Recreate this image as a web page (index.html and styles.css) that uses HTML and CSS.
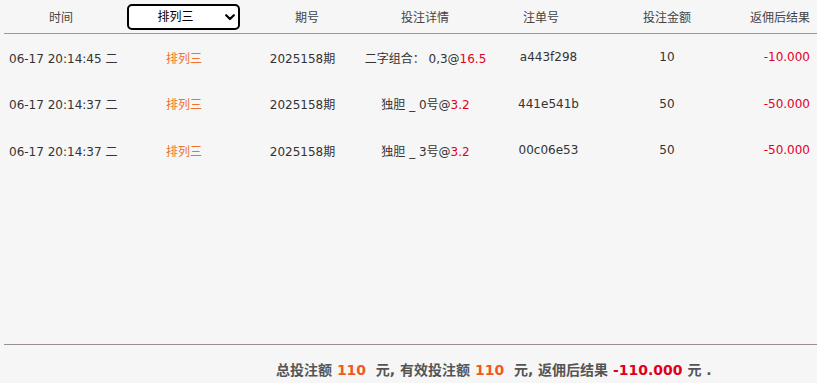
FILE: index.html
```html
<!DOCTYPE html>
<html lang="zh">
<head>
<meta charset="utf-8">
<title>投注记录</title>
<link rel="stylesheet" href="styles.css">
</head>
<body>
<div class="page">
  <div class="list">
    <div class="head">
      <div class="hcell c-time">时间</div>
      <div class="hcell">
        <span class="select-wrap">
          <select class="game-select">
            <option>排列三</option>
          </select>
          <svg class="chev" width="10" height="7" viewBox="0 0 10 7"><path d="M1.2 1.2 L5 5 L8.8 1.2" fill="none" stroke="#000" stroke-width="2.2" stroke-linecap="round" stroke-linejoin="round"/></svg>
        </span>
      </div>
      <div class="hcell">期号</div>
      <div class="hcell">投注详情</div>
      <div class="hcell">注单号</div>
      <div class="hcell">投注金额</div>
      <div class="hcell c-result">返佣后结果</div>
    </div>
    <div class="rows">
      <div class="row">
        <div class="cell c-time">06-17 20:14:45 二</div>
        <div class="cell game">排列三</div>
        <div class="cell">2025158期</div>
        <div class="cell">二字组合： 0,3@<span class="odds">16.5</span></div>
        <div class="cell c-id">a443f298</div>
        <div class="cell">10</div>
        <div class="cell c-result neg">-10.000</div>
      </div>
      <div class="row">
        <div class="cell c-time">06-17 20:14:37 二</div>
        <div class="cell game">排列三</div>
        <div class="cell">2025158期</div>
        <div class="cell">独胆 _ 0号@<span class="odds">3.2</span></div>
        <div class="cell c-id">441e541b</div>
        <div class="cell">50</div>
        <div class="cell c-result neg">-50.000</div>
      </div>
      <div class="row">
        <div class="cell c-time">06-17 20:14:37 二</div>
        <div class="cell game">排列三</div>
        <div class="cell">2025158期</div>
        <div class="cell">独胆 _ 3号@<span class="odds">3.2</span></div>
        <div class="cell c-id">00c06e53</div>
        <div class="cell">50</div>
        <div class="cell c-result neg">-50.000</div>
      </div>
    </div>
  </div>
  <div class="summary">
    <span>总投注额</span> <b class="amt">110</b> &nbsp;<span>元, 有效投注额</span> <b class="amt">110</b> &nbsp;<span>元, 返佣后结果</span> <b class="total">-110.000</b> <span>元 .</span>
  </div>
</div>
</body>
</html>
```

FILE: styles.css
```css
html, body {
  margin: 0;
  padding: 0;
  background: #f6f6f6;
}

body {
  font-family: "DejaVu Sans", Verdana, "Noto Sans CJK SC", sans-serif;
  font-size: 12px;
  color: #333;
}

.page {
  width: 817px;
  height: 383px;
  display: flex;
  flex-direction: column;
}

.list {
  height: 344px;
}

.head {
  margin-left: 4px;
  height: 33px;
  border-bottom: 1px solid #ad9090;
  display: grid;
  grid-template-columns: 118px 123px 124px 112px 120px 132px 1fr;
  align-items: center;
  color: #444;
}

.hcell {
  text-align: center;
  white-space: nowrap;
}

.hcell.c-time {
  padding-right: 4px;
}

.hcell.c-result {
  text-align: right;
  padding-right: 7px;
}

.select-wrap {
  position: relative;
  display: inline-block;
  vertical-align: middle;
}

.game-select {
  appearance: none;
  -webkit-appearance: none;
  width: 113px;
  height: 26px;
  box-sizing: border-box;
  border: 2px solid #000;
  border-radius: 5px;
  background: #fff;
  font-family: "DejaVu Sans", "Noto Sans CJK SC", sans-serif;
  font-size: 12px;
  color: #000;
  text-align: center;
  text-align-last: center;
  padding: 0 16px 0 0;
  margin: 0;
  display: block;
}

.chev {
  position: absolute;
  right: 5px;
  top: 10px;
  pointer-events: none;
}

.rows {
  margin-left: 4px;
}

.row {
  height: 46.5px;
  display: grid;
  grid-template-columns: 123px 114px 123px 123px 123px 114px 1fr;
  align-items: center;
}

.cell {
  text-align: center;
  white-space: nowrap;
}

.cell.c-time {
  text-align: left;
  padding-left: 5px;
}

.cell.c-result {
  text-align: right;
  padding-right: 7px;
}

.game {
  color: #f0712f;
}

.odds,
.neg {
  color: #e3001f;
}

.summary {
  flex: 1;
  margin-left: 4px;
  border-top: 1px solid #9a8f8f;
  padding: 16px 0 0 272px;
  font-size: 14px;
  font-weight: bold;
  color: #555;
  white-space: nowrap;
  line-height: 18px;
}

.amt {
  color: #f05a22;
}

.total {
  color: #e0001b;
}
```
